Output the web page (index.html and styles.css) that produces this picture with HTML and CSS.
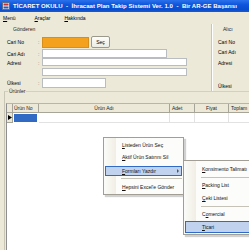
FILE: index.html
```html
<!DOCTYPE html>
<html lang="tr">
<head>
    <meta charset="UTF-8">
    <title>Ticaret Okulu</title>
    <link rel="stylesheet" href="styles.css">
</head>
<body>
    <div class="window">
        <div class="titlebar">
            <svg class="appicon" width="8" height="8" viewBox="0 0 8 8">
                <rect x="0.5" y="0.5" width="7" height="7" fill="#f4f4f4" stroke="#5a6e8c"/>
                <rect x="1.5" y="1.5" width="5" height="2" fill="#c8302c"/>
                <rect x="1.5" y="4.5" width="5" height="2" fill="#2a58b8"/>
            </svg>
            <span class="title">TİCARET OKULU  -  İhracaat Plan Takip Sistemi Ver. 1.0  -  Bir AR-GE Başarısı</span>
        </div>

        <div class="menubar">
            <span><u>M</u>enü</span>
            <span><u>A</u>raçlar</span>
            <span><u>H</u>akkında</span>
        </div>

        <div class="top">
            <div class="group sender">
                <div class="legend">Gönderen</div>
                <div class="row r1">
                    <span class="lbl">Cari No</span><span class="colon">:</span>
                    <span class="input orange"></span>
                    <span class="btn">Seç</span>
                </div>
                <div class="row r2">
                    <span class="lbl">Cari Adı</span><span class="colon">:</span>
                    <span class="input w-name"></span>
                </div>
                <div class="row r3">
                    <span class="lbl">Adresi</span><span class="colon">:</span>
                    <div class="stack">
                        <span class="input w-addr"></span>
                        <span class="input w-addr"></span>
                    </div>
                </div>
                <div class="row r4">
                    <span class="lbl">Ülkesi</span><span class="colon">:</span>
                    <span class="input w-country"></span>
                </div>
            </div>
            <div class="group receiver">
                <div class="legend">Alıcı</div>
                <div class="rlbl a1">Cari No</div>
                <div class="rlbl a2">Cari Adı</div>
                <div class="rlbl a3">Adresi</div>
                <div class="rlbl a4">Ülkesi</div>
            </div>
        </div>

        <div class="group products">
            <div class="legend">Ürünler</div>
            <div class="grid">
                <div class="grow head">
                    <span class="c-rh"></span>
                    <span class="c-no">Ürün No</span>
                    <span class="c-name">Ürün Adı</span>
                    <span class="c-qty">Adet</span>
                    <span class="c-price">Fiyat</span>
                    <span class="c-total">Toplam</span>
                </div>
                <div class="grow data">
                    <span class="c-rh"><svg width="4" height="5" viewBox="0 0 4 5"><path d="M0 0 L4 2.5 L0 5 Z" fill="#000"/></svg></span>
                    <span class="c-no sel"></span>
                    <span class="c-name"></span>
                    <span class="c-qty"></span>
                    <span class="c-price"></span>
                    <span class="c-total"></span>
                </div>
            </div>
        </div>
    </div>

    <div class="ctx main-ctx">
        <div class="item"><u>L</u>isteden Ürün Seç</div>
        <div class="item"><u>A</u>ktif Ürün Satırını Sil</div>
        <div class="gap"></div>
        <div class="item hot"><u>F</u>ormları Yazdır<span class="arrow"></span></div>
        <div class="sep"></div>
        <div class="item"><u>H</u>epsini Excel'e Gönder</div>
    </div>

    <div class="ctx sub-ctx">
        <div class="item"><u>K</u>onsimento Talimatı</div>
        <div class="sep"></div>
        <div class="item"><u>P</u>acking List</div>
        <div class="item"><u>Ç</u>eki Listesi</div>
        <div class="sep"></div>
        <div class="item">C<u>o</u>mercial</div>
        <div class="item hot"><u>T</u>icari</div>
    </div>
</body>
</html>
```

FILE: styles.css
```css
body {
    margin: 0;
    width: 249px;
    height: 250px;
    overflow: hidden;
    background-color: #ece9d8;
    font-family: "Liberation Sans", Arial, sans-serif;
    font-size: 5px;
    color: #000;
    position: relative;
}

.window {
    width: 249px;
    height: 250px;
    overflow: hidden;
}

/* title bar */
.titlebar {
    height: 12px;
    display: flex;
    align-items: center;
    gap: 3px;
    padding-left: 2px;
    background: linear-gradient(#2b71ec, #0d55dc 40%, #0a4ccd 80%, #1a5ad6);
    color: white;
    white-space: nowrap;
    overflow: hidden;
}

.title {
    font-weight: bold;
    font-size: 6px;
    letter-spacing: 0.05px;
    white-space: pre;
}

/* menu */
.menubar {
    height: 12px;
    display: flex;
    align-items: center;
    padding-left: 3px;
    gap: 11px;
    white-space: nowrap;
}

.menubar span:nth-child(2) {
    margin-left: 8px;
}

.menubar span:nth-child(3) {
    margin-left: 3px;
}

/* group boxes */
.top {
    display: flex;
    height: 67px;
}

.group {
    position: relative;
}

.legend {
    color: #222;
    line-height: 6px;
    white-space: nowrap;
}

.sender {
    width: 208px;
    margin-left: 3px;
    border-right: 1px solid #c9c6b6;
    box-shadow: 1px 0 0 #fff;
    padding-top: 1px;
}

.sender .legend {
    margin-left: 10px;
    margin-top: 1px;
}

.receiver {
    flex: 1;
    margin-left: 3px;
    padding-top: 2px;
}

.receiver .legend {
    margin-left: 8px;
}

.rlbl {
    position: absolute;
    left: 3px;
    line-height: 6px;
    white-space: nowrap;
}

.a1 { top: 15px; }
.a2 { top: 25px; }
.a3 { top: 36px; }
.a4 { top: 59px; }

.row {
    display: flex;
    align-items: center;
}

.lbl {
    width: 31px;
    padding-left: 4px;
    white-space: nowrap;
}

.colon {
    width: 4px;
    color: #555;
}

.input {
    display: block;
    background: #fff;
    border: 1px solid #b9bcc0;
    box-sizing: border-box;
}

.r1 {
    margin-top: 4px;
    height: 12px;
}

.r1 .input {
    height: 11px;
}

.orange {
    width: 47px;
    background: #f4a21e;
    border-color: #d88f1a;
}

.btn {
    margin-left: 2px;
    width: 19px;
    height: 12px;
    box-sizing: border-box;
    border: 1px solid #9a9a8c;
    border-radius: 2px;
    background: linear-gradient(#fdfdfb, #ecebe3);
    display: flex;
    align-items: center;
    justify-content: center;
}

.r2 {
    margin-top: 1px;
    height: 9px;
}

.w-name {
    width: 125px;
    height: 9px;
}

.r3 {
    align-items: flex-start;
    height: 19px;
}

.r3 .lbl,
.r3 .colon {
    margin-top: 2px;
}

.stack {
    display: flex;
    flex-direction: column;
    gap: 2px;
}

.w-addr {
    width: 145px;
    height: 8px;
}

.r4 {
    margin-top: 1px;
    height: 10px;
}

.w-country {
    width: 64px;
    height: 10px;
}

/* products */
.products {
    height: 159px;
    border-top: 1px solid #d3d0c0;
    margin-left: 4px;
    border-left: 1px solid #c9c6b6;
}

.products .legend {
    position: absolute;
    left: 3px;
    top: -4px;
    background: #ece9d8;
    padding: 0 1px;
}

.grid {
    position: absolute;
    left: 1px;
    top: 11px;
    width: 243px;
    height: 150px;
    overflow: hidden;
    background: #fff;
    border-left: 1px solid #8f8f8f;
    border-top: 1px solid #b5b5b5;
    box-sizing: border-box;
}

.grow {
    display: flex;
    white-space: nowrap;
}

.grow span {
    box-sizing: border-box;
    display: flex;
    align-items: center;
    overflow: hidden;
    flex-shrink: 0;
}

.head {
    height: 9px;
    background: #ece9d8;
}

.head span {
    border-right: 1px solid #a7a597;
    border-bottom: 1px solid #a7a597;
    justify-content: center;
    color: #222;
}

.data {
    height: 10px;
}

.data span {
    border-right: 1px solid #e2e2e2;
    border-bottom: 1px solid #e2e2e2;
}

.c-rh { width: 6px; }
.c-no { width: 26px; }
.c-name { width: 131px; }
.c-qty { width: 25px; }
.c-price { width: 34px; }
.c-total { width: 21px; }

.head .c-no { justify-content: flex-start; padding-left: 1px; }
.head .c-qty { justify-content: flex-start; padding-left: 2px; }
.head .c-total { justify-content: flex-start; padding-left: 2px; border-right: none; }
.data .c-total { border-right: none; }

.data .c-rh {
    background: #ece9d8;
    border-right: 1px solid #a7a597;
    border-bottom: 1px solid #a7a597;
    padding-left: 1px;
}

.data .sel {
    background: #316ac5;
    border: 1px solid #fff;
    border-right: 2px solid #fff;
}

/* context menus */
.ctx {
    position: absolute;
    background: linear-gradient(90deg, #fbfbf9 0, #f0eee4 12px, #fcfcfa 12px);
    border: 1px solid #a19f95;
    box-shadow: 2px 2px 1px rgba(0, 0, 0, 0.18);
    padding: 1px 1px;
    white-space: nowrap;
}

.main-ctx {
    left: 103px;
    top: 137px;
    width: 77px;
}

.sub-ctx {
    left: 183px;
    top: 160px;
    width: 65px;
    padding: 2px 0 1px 1px;
    border-right: none;
    overflow: hidden;
}

.item {
    height: 12px;
    line-height: 12px;
    padding-left: 17px;
    box-sizing: border-box;
    position: relative;
    color: #111;
}

.sub-ctx .item {
    height: 13px;
    line-height: 13px;
    padding-left: 17px;
}

.hot {
    background: #c1d2ee;
    outline: 1px solid #316ac5;
    outline-offset: -1px;
}

.main-ctx .hot {
    height: 10px;
    line-height: 10px;
}

.sub-ctx .hot {
    height: 12px;
    line-height: 12px;
}

.arrow {
    position: absolute;
    right: 3px;
    top: 3px;
    width: 0;
    height: 0;
    border-left: 2px solid #555;
    border-top: 2px solid transparent;
    border-bottom: 2px solid transparent;
}

.gap {
    height: 3px;
}

.sep {
    height: 3px;
    margin-left: 16px;
    background: linear-gradient(transparent 1px, #c5c2b8 1px, #c5c2b8 2px, transparent 2px);
}

.main-ctx .sep {
    height: 5px;
    background: linear-gradient(transparent 2px, #c5c2b8 2px, #c5c2b8 3px, transparent 3px);
}
```
